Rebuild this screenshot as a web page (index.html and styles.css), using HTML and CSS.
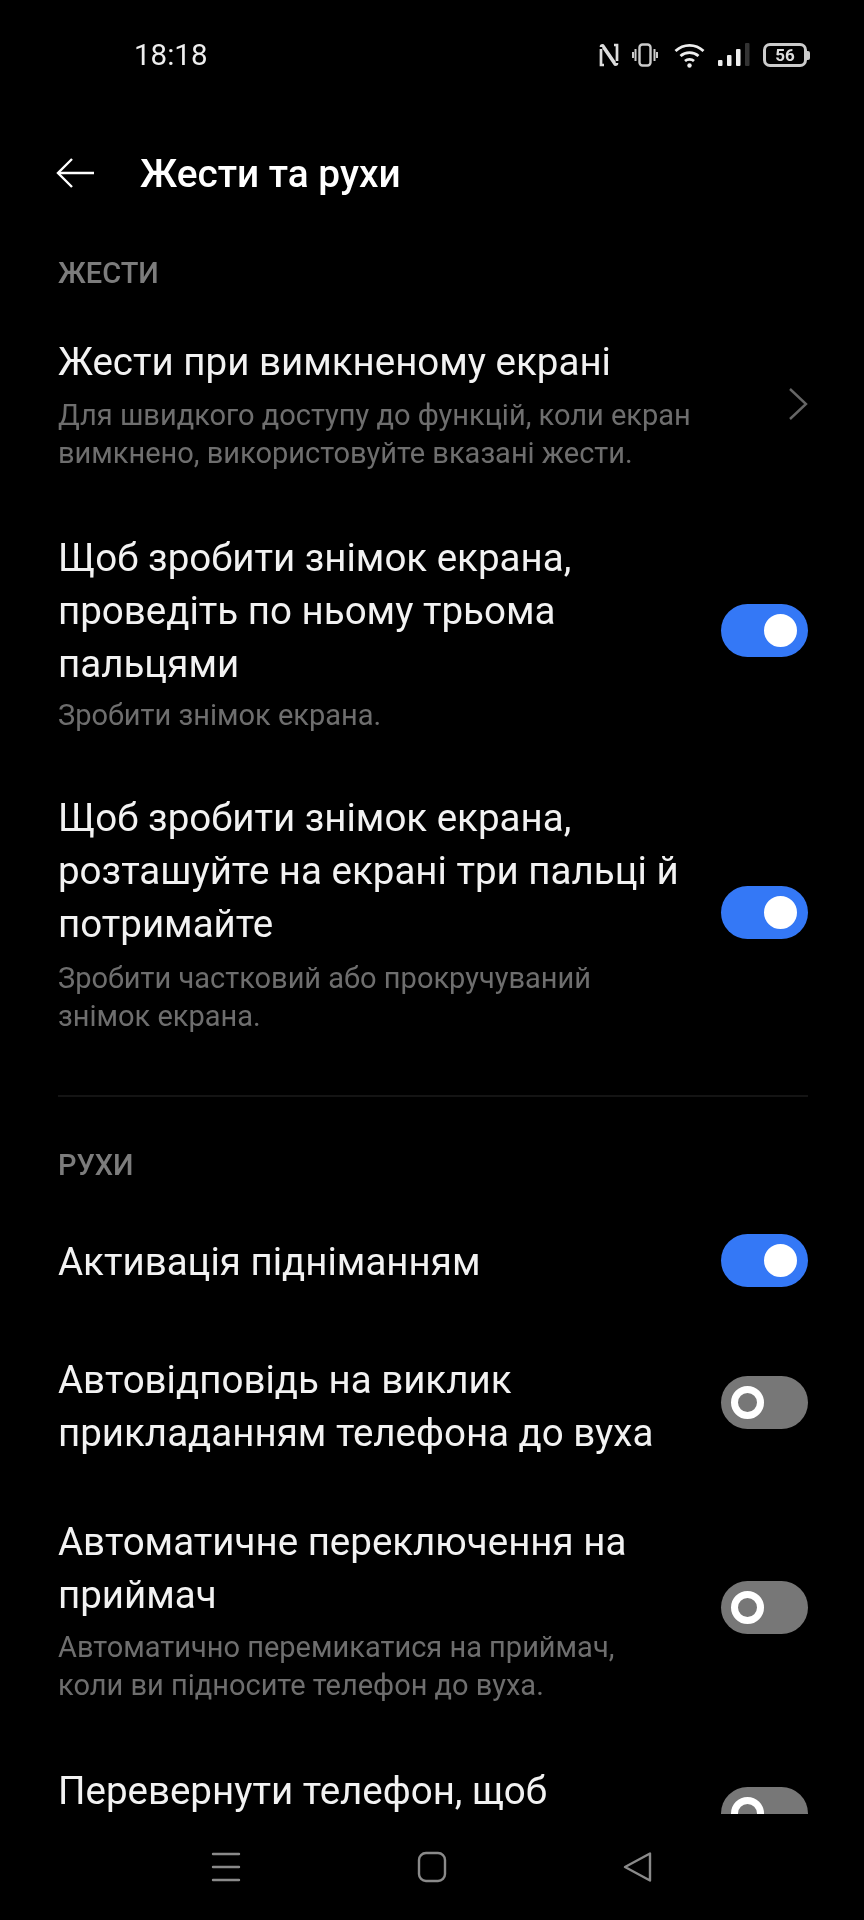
FILE: index.html
```html
<!DOCTYPE html>
<html lang="uk">
<head>
  <meta charset="UTF-8">
  <meta name="viewport" content="width=device-width, initial-scale=1.0">
  <title>Жести та рухи</title>
  <link rel="stylesheet" href="styles.css">
</head>
<body>
<div class="phone">
  <div class="status-bar">
    <span class="time">18:18</span>
    <div class="status-icons">
      <svg class="ic-nfc" width="20" height="24" viewBox="0 0 20 24" fill="none" stroke="#ddd" stroke-width="2.700">
        <path d="M2 6V22H5"/>
        <path d="M2 4Q2 2 4 2.500L16 20"/>
        <path d="M18 18V2H15"/>
        <path d="M18 20Q18 22 16 21.500L4 4"/>
      </svg>
      <svg class="ic-vib" width="26" height="24" viewBox="0 0 26 24" fill="none" stroke="#ccc" stroke-width="2.400">
        <rect x="7.500" y="1.500" width="11" height="21" rx="3"/>
        <path d="M3.500 6V18M1 9V15M22.500 6V18M25 9V15" stroke-width="2"/>
      </svg>
      <svg class="ic-wifi" width="31" height="25" viewBox="0 0 31 25" fill="none" stroke="#eee" stroke-width="2.800">
        <path d="M1.500 8C9.500 .5 21.500 .5 29.500 8"/>
        <path d="M6.500 13C11.500 8.500 19.500 8.500 24.500 13"/>
        <path d="M11 18C13.500 15.800 17.500 15.800 20 18"/>
        <circle cx="15.500" cy="22.500" r="2.200" fill="#eee" stroke="none"/>
      </svg>
      <svg class="ic-signal" width="32" height="24" viewBox="0 0 32 24" fill="#eee">
        <rect x="0" y="17" width="4.500" height="6" rx="1"/>
        <rect x="9" y="12" width="4.500" height="11" rx="1"/>
        <rect x="18" y="6" width="4.500" height="17" rx="1"/>
        <rect x="27" y="0" width="4.500" height="23" rx="1" fill="#333"/>
      </svg>
      <div class="battery">
        <span class="battery-body">56</span>
        <span class="battery-cap"></span>
      </div>
    </div>
  </div>

  <header class="top-bar">
    <svg class="back" width="38" height="30" viewBox="0 0 38 30" fill="none" stroke="#fff" stroke-width="2.400">
      <path d="M16 1L2 15L16 29"/>
      <path d="M2 15H38"/>
    </svg>
    <h1>Жести та рухи</h1>
  </header>

  <main class="list">
    <h2 class="section-title first">ЖЕСТИ</h2>

    <div class="row row-a">
      <div class="row-text">
        <div class="row-title">Жести при вимкненому екрані</div>
        <div class="row-sub">Для швидкого доступу до функцій, коли екран<br>вимкнено, використовуйте вказані жести.</div>
      </div>
      <svg class="chevron" width="20" height="34" viewBox="0 0 20 34" fill="none" stroke="#666" stroke-width="2.400">
        <path d="M2 2L18 17L2 32"/>
      </svg>
    </div>

    <div class="row row-b">
      <div class="row-text">
        <div class="row-title">Щоб зробити знімок екрана,<br>проведіть по ньому трьома<br>пальцями</div>
        <div class="row-sub">Зробити знімок екрана.</div>
      </div>
      <span class="toggle on raised"></span>
    </div>

    <div class="row row-c">
      <div class="row-text">
        <div class="row-title">Щоб зробити знімок екрана,<br>розташуйте на екрані три пальці й<br>потримайте</div>
        <div class="row-sub">Зробити частковий або прокручуваний<br>знімок екрана.</div>
      </div>
      <span class="toggle on"></span>
    </div>

    <div class="divider"></div>

    <h2 class="section-title">РУХИ</h2>

    <div class="row row-d">
      <div class="row-text">
        <div class="row-title">Активація підніманням</div>
      </div>
      <span class="toggle on"></span>
    </div>

    <div class="row row-e">
      <div class="row-text">
        <div class="row-title">Автовідповідь на виклик<br>прикладанням телефона до вуха</div>
      </div>
      <span class="toggle"></span>
    </div>

    <div class="row row-f">
      <div class="row-text">
        <div class="row-title">Автоматичне переключення на<br>приймач</div>
        <div class="row-sub">Автоматично перемикатися на приймач,<br>коли ви підносите телефон до вуха.</div>
      </div>
      <span class="toggle raised"></span>
    </div>

    <div class="row row-g">
      <div class="row-text">
        <div class="row-title">Перевернути телефон, щоб</div>
      </div>
      <span class="toggle"></span>
    </div>
  </main>

  <nav class="nav-bar">
    <svg width="32" height="32" viewBox="0 0 32 32" fill="none" stroke="#8a8a8a" stroke-width="2.400" stroke-linecap="round">
      <path d="M3 3H29M3 16H29M3 29H29"/>
    </svg>
    <svg width="32" height="32" viewBox="0 0 32 32" fill="none" stroke="#8a8a8a" stroke-width="2.400">
      <rect x="3" y="2" width="26" height="28" rx="7"/>
    </svg>
    <svg width="32" height="32" viewBox="0 0 32 32" fill="none" stroke="#8a8a8a" stroke-width="2.400" stroke-linejoin="round">
      <path d="M3 16L28 2.500V29.500Z"/>
    </svg>
  </nav>
</div>
</body>
</html>
```

FILE: styles.css
```css
*, *::after {
  box-sizing: border-box;
}

body {
  margin: 0;
  background: #000;
  font-family: Roboto, "Noto Sans", sans-serif;
  color: #fff;
}

.phone {
  width: 864px;
  height: 1920px;
  display: flex;
  flex-direction: column;
  overflow: hidden;
  background: #000;
  filter: blur(0.6px);
}

/* status bar */
.status-bar {
  height: 110px;
  flex: none;
  display: flex;
  justify-content: space-between;
  align-items: center;
  padding: 0 54px 0 134px;
}

.time {
  font-size: 29.5px;
  color: #eee;
}

.status-icons {
  display: flex;
  align-items: center;
  gap: 13px;
}

.ic-wifi {
  margin-left: 3px;
}

.battery {
  display: flex;
  align-items: center;
}

.battery-body {
  width: 44px;
  height: 24px;
  border: 3px solid #ccc;
  border-radius: 7px;
  font-size: 17px;
  font-weight: 700;
  line-height: 18px;
  text-align: center;
  color: #ddd;
}

.battery-cap {
  width: 3px;
  height: 9px;
  background: #ccc;
  border-radius: 0 2px 2px 0;
}

/* header */
.top-bar {
  height: 126px;
  flex: none;
  display: flex;
  align-items: center;
  padding-left: 56px;
  gap: 46px;
}

h1 {
  margin: 0;
  font-size: 38.800px;
  font-weight: 500;
}

/* list */
.list {
  height: 1578px;
  flex: none;
  overflow: hidden;
  padding: 0 56px 0 58px;
}

.section-title {
  margin: 0;
  font-size: 29px;
  font-weight: 500;
  line-height: 36px;
  color: #7c7c7c;
}

.section-title.first {
  padding-top: 19px;
}

.row {
  display: flex;
  align-items: center;
  justify-content: space-between;
}

.row-title {
  font-size: 38.500px;
  line-height: 53px;
  color: #f2f2f2;
}

.row-sub {
  margin-top: 8px;
  font-size: 29px;
  line-height: 38px;
  color: #6e6e6e;
}

.row-a {
  margin-top: 44px;
}

.row-b {
  margin-top: 59px;
}

.row-b .row-sub {
  margin-top: 6px;
}

.row-c {
  margin-top: 57px;
}

.row-c .row-sub {
  margin-top: 9px;
}

.row-d {
  margin-top: 51px;
}

.row-e {
  margin-top: 64px;
}

.row-f {
  margin-top: 56px;
}

.row-f .row-sub {
  margin-top: 7px;
}

.row-g {
  height: 100px;
  margin-top: 60px;
}

.row-g .row-text {
  align-self: flex-start;
}

.divider {
  height: 2px;
  margin-top: 60px;
  margin-bottom: 50px;
  background: #141414;
}

.toggle {
  position: relative;
  flex: none;
  width: 87px;
  height: 53px;
  margin-bottom: 2px;
  border-radius: 27px;
  background: #777;
}

.row-e .toggle {
  margin-bottom: 7px;
}

.toggle.raised {
  margin-bottom: 5px;
}

.toggle::after {
  content: "";
  position: absolute;
  top: 10px;
  left: 10px;
  width: 33px;
  height: 33px;
  border: 7px solid #fff;
  border-radius: 50%;
}

.toggle.on {
  background: #3478f6;
}

.toggle.on::after {
  left: auto;
  right: 11px;
  background: #fff;
}

/* nav */
.nav-bar {
  flex: 1;
  display: flex;
  gap: 174px;
  align-items: center;
  padding-left: 210px;
}
```
